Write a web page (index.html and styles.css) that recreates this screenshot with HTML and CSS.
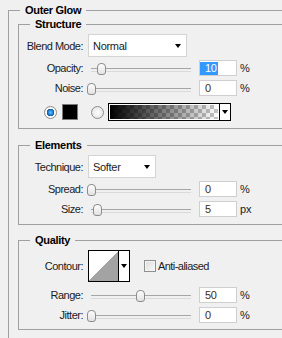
FILE: index.html
```html
<!DOCTYPE html>
<html lang="en">
  <head>
    <meta charset="UTF-8" />
    <title>Outer Glow</title>
    <link rel="stylesheet" href="styles.css">
  </head>

  <body>
    <fieldset class="group outer">
      <legend>Outer Glow</legend>

      <fieldset class="group inner structure">
        <legend>Structure</legend>
        <div class="row row-select">
          <span class="left">Blend Mode:</span>
          <div class="select blend"><span>Normal</span><i class="arrow"></i></div>
        </div>
        <div class="row">
          <span class="left">Opacity:</span>
          <div class="slider"><span class="thumb" style="left: 10px"></span></div>
          <div class="num"><span class="sel">10</span></div>
          <span class="unit">%</span>
        </div>
        <div class="row">
          <span class="left">Noise:</span>
          <div class="slider"><span class="thumb" style="left: 0px"></span></div>
          <div class="num"><span>0</span></div>
          <span class="unit">%</span>
        </div>
        <div class="row row-color">
          <span class="radio checked"></span>
          <span class="swatch"></span>
          <span class="radio"></span>
          <div class="gradient">
            <span class="ramp"></span>
            <span class="drop"><i class="arrow"></i></span>
          </div>
        </div>
      </fieldset>

      <fieldset class="group inner elements">
        <legend>Elements</legend>
        <div class="row row-select">
          <span class="left">Technique:</span>
          <div class="select technique"><span>Softer</span><i class="arrow"></i></div>
        </div>
        <div class="row">
          <span class="left">Spread:</span>
          <div class="slider"><span class="thumb" style="left: 0px"></span></div>
          <div class="num"><span>0</span></div>
          <span class="unit">%</span>
        </div>
        <div class="row">
          <span class="left">Size:</span>
          <div class="slider"><span class="thumb" style="left: 6px"></span></div>
          <div class="num"><span>5</span></div>
          <span class="unit">px</span>
        </div>
      </fieldset>

      <fieldset class="group inner quality">
        <legend>Quality</legend>
        <div class="row row-contour">
          <span class="left">Contour:</span>
          <div class="contour">
            <span class="curve"></span>
            <span class="drop"><i class="arrow"></i></span>
          </div>
          <span class="checkbox"></span>
          <span class="check-label">Anti-aliased</span>
        </div>
        <div class="row row-range">
          <span class="left">Range:</span>
          <div class="slider"><span class="thumb" style="left: 49px"></span></div>
          <div class="num"><span>50</span></div>
          <span class="unit">%</span>
        </div>
        <div class="row">
          <span class="left">Jitter:</span>
          <div class="slider"><span class="thumb" style="left: 0px"></span></div>
          <div class="num"><span>0</span></div>
          <span class="unit">%</span>
        </div>
      </fieldset>
    </fieldset>
  </body>
</html>
```

FILE: styles.css
```css
* {
  margin: 0;
  padding: 0;
  box-sizing: border-box;
}

body {
  background-color: #f0f0f0;
  font-family: "Liberation Sans", Arial, sans-serif;
  font-size: 11px;
  color: #1b1b1b;
  padding: 4px 0 0 8px;
  height: 338px;
  overflow: hidden;
}

.group {
  border: 1px solid #a0a0a0;
  border-right: 0;
  min-width: 0;
}

/* the dialog runs on past the right and bottom edges */
.outer {
  width: 274px;
  height: 334px;
  border-bottom: 0;
  padding: 1px 0 0 9px;
}

legend {
  font-weight: bold;
  line-height: 13px;
  padding: 0 5px;
  margin-left: 2px;
  letter-spacing: -0.3px;
  color: #000;
}

.inner {
  padding: 3px 0 0 0;
}
.inner legend {
  margin-left: 11px;
}

.structure {
  padding-bottom: 7px;
}
.elements {
  margin-top: 10px;
  padding-bottom: 5px;
}
.quality {
  margin-top: 9px;
  padding-bottom: 4px;
}

.row {
  display: flex;
  align-items: center;
  height: 20px;
}
.row-select {
  height: 23px;
  margin-bottom: 1px;
}

.left {
  width: 64px;
  flex-shrink: 0;
  text-align: right;
  letter-spacing: -0.5px;
}

/* dropdowns */
.select {
  height: 23px;
  margin-left: 5px;
  background-color: #fff;
  border: 1px solid #d4d4d4;
  display: flex;
  align-items: center;
  justify-content: space-between;
  padding: 0 5px 0 4px;
  letter-spacing: -0.3px;
}
.blend {
  width: 99px;
}
.technique {
  width: 68px;
}
.arrow {
  display: block;
  width: 0;
  height: 0;
  border-left: 3.5px solid transparent;
  border-right: 3.5px solid transparent;
  border-top: 4px solid #000;
}

/* sliders */
.slider {
  position: relative;
  width: 109px;
  height: 13px;
  margin-left: 4px;
}
.slider::before {
  content: "";
  position: absolute;
  left: 4px;
  right: 5px;
  top: 6px;
  height: 2px;
  border-top: 1px solid #a6a6a6;
  border-bottom: 1px solid #dadada;
}
.thumb {
  position: absolute;
  top: 1px;
  width: 9px;
  height: 12px;
  border: 1px solid #8c8c8c;
  border-radius: 4px 4px 3px 3px;
  background: linear-gradient(#fdfdfd, #e2e2e2);
}

.num {
  width: 38px;
  height: 16px;
  margin-left: 3px;
  background-color: #fff;
  border: 1px solid #cfcfcf;
  padding: 1px 0 0 0;
  display: flex;
  align-items: center;
  color: #4a2a00;
}
.num span {
  padding-left: 5px;
  line-height: 13px;
  letter-spacing: -0.4px;
}
.num .sel {
  background-color: #3399ff;
  color: #fff;
  padding-right: 2px;
}
.unit {
  margin-left: 3px;
  color: #141a2a;
}

/* color row */
.row-color {
  height: 18px;
  margin-top: 5px;
  padding-left: 25px;
}
.radio {
  width: 13px;
  height: 13px;
  border-radius: 50%;
  border: 1px solid #8d8d8d;
  background: radial-gradient(circle, #ffffff 0, #dcdcdc 100%);
}
.radio.checked {
  background: radial-gradient(circle, #6ec3ff 0, #1a7fd4 2.5px, #0d4f94 3.5px, #ffffff 4px, #e6e6e6 100%);
}
.swatch {
  width: 16px;
  height: 16px;
  margin: 0 13px 0 5px;
  background-color: #000;
  border: 1px solid #7a7a7a;
}
.gradient {
  width: 123px;
  height: 18px;
  margin-left: 4px;
  display: flex;
  border: 1px solid #000;
}
.ramp {
  flex: 1;
  border: 1px solid #fff;
  background:
    linear-gradient(to right, #000, rgba(0, 0, 0, 0)),
    repeating-conic-gradient(#c4c4c4 0 25%, #fff 0 50%) 0 0 / 8px 8px;
}
.drop {
  width: 11px;
  border-left: 1px solid #000;
  background-color: #fff;
  display: flex;
  align-items: center;
  justify-content: center;
}

/* quality */
.row-contour {
  height: 32px;
}
.contour {
  width: 42px;
  height: 32px;
  margin-left: 5px;
  display: flex;
  border: 1px solid #000;
}
.curve {
  flex: 1;
  background: linear-gradient(to bottom right, #fff 50%, #a3a3a3 50%);
}
.checkbox {
  width: 12px;
  height: 12px;
  margin-left: 14px;
  border: 1px solid #8f8f8f;
  background: linear-gradient(135deg, #dcdcdc, #f8f8f8);
  box-shadow: inset 0 0 0 1px #f4f4f4;
}
.check-label {
  margin-left: 2px;
  letter-spacing: -0.55px;
}
.row-range {
  margin-top: 3px;
}
```
